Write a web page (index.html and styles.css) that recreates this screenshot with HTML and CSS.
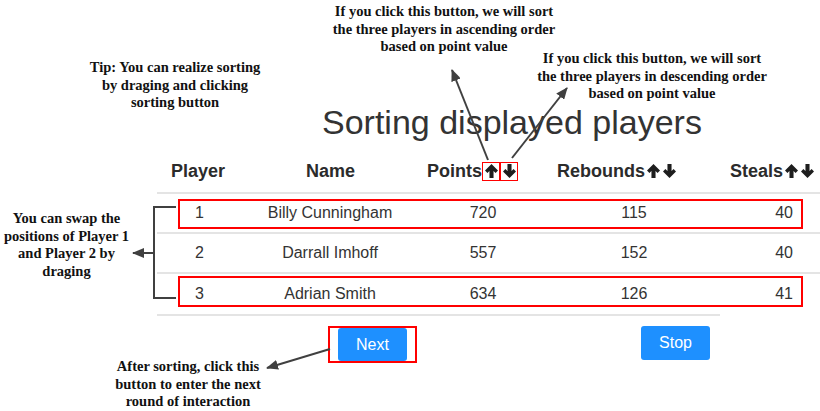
FILE: index.html
```html
<!DOCTYPE html>
<html>
<head>
<meta charset="utf-8">
<link rel="stylesheet" href="styles.css">
</head>
<body>
<div class="app">
  <h1 class="title">Sorting displayed players</h1>
  <div class="table">
    <div class="thead">
      <div class="th">Player</div>
      <div class="th">Name</div>
      <div class="th">Points<span class="sort boxed"><svg viewBox="0 0 14 15"><path d="M7 0L14 7L11.4 9.6L9.2 7.4V15H4.8V7.4L2.6 9.6L0 7Z"/></svg></span><span class="sort boxed"><svg viewBox="0 0 14 15"><path d="M7 15L14 8L11.4 5.4L9.2 7.6V0H4.8V7.6L2.6 5.4L0 8Z"/></svg></span></div>
      <div class="th">Rebounds<span class="sort"><svg viewBox="0 0 14 15"><path d="M7 0L14 7L11.4 9.6L9.2 7.4V15H4.8V7.4L2.6 9.6L0 7Z"/></svg></span><span class="sort"><svg viewBox="0 0 14 15"><path d="M7 15L14 8L11.4 5.4L9.2 7.6V0H4.8V7.6L2.6 5.4L0 8Z"/></svg></span></div>
      <div class="th">Steals<span class="sort"><svg viewBox="0 0 14 15"><path d="M7 0L14 7L11.4 9.6L9.2 7.4V15H4.8V7.4L2.6 9.6L0 7Z"/></svg></span><span class="sort"><svg viewBox="0 0 14 15"><path d="M7 15L14 8L11.4 5.4L9.2 7.6V0H4.8V7.6L2.6 5.4L0 8Z"/></svg></span></div>
    </div>
    <div class="row">
      <div class="c-num">1</div><div class="c-name">Billy Cunningham</div><div class="c-pts">720</div><div class="c-reb">115</div><div class="c-stl">40</div>
      <div class="hl hl-1"></div>
    </div>
    <div class="row">
      <div class="c-num">2</div><div class="c-name">Darrall Imhoff</div><div class="c-pts">557</div><div class="c-reb">152</div><div class="c-stl">40</div>
    </div>
    <div class="row row-last">
      <div class="c-num">3</div><div class="c-name">Adrian Smith</div><div class="c-pts">634</div><div class="c-reb">126</div><div class="c-stl">41</div>
      <div class="hl hl-3"></div>
    </div>
    <div class="bottom-line"></div>
  </div>
  <div class="actions">
    <span class="next-wrap"><button class="btn">Next</button></span>
    <button class="btn btn-stop">Stop</button>
  </div>
</div>

<div class="note note-asc">If you click this button, we will sort<br>the three players in ascending order<br>based on point value</div>
<div class="note note-desc">If you click this button, we will sort<br>the three players in descending order<br>based on point value</div>
<div class="note note-tip">Tip: You can realize sorting<br>by draging and clicking<br>sorting button</div>
<div class="note note-swap">You can swap the<br>positions of Player 1<br>and Player 2 by<br>draging</div>
<div class="note note-after">After sorting, click this<br>button to enter the next<br>round of interaction</div>

<svg class="overlay" width="820" height="411" viewBox="0 0 820 411">
  <defs>
    <marker id="ah" viewBox="0 0 12 10" refX="11" refY="5" markerUnits="userSpaceOnUse" markerWidth="12" markerHeight="10" orient="auto">
      <path d="M0 0L12 5L0 10Z" fill="#404040"/>
    </marker>
  </defs>
  <g stroke="#404040" stroke-width="2" fill="none">
    <line x1="488" y1="160" x2="452" y2="70" marker-end="url(#ah)"/>
    <line x1="512" y1="158" x2="567" y2="88" marker-end="url(#ah)"/>
    <polyline points="176,207 154,207 154,298 176,298"/>
    <line x1="154" y1="253" x2="133" y2="253" marker-end="url(#ah)"/>
    <line x1="330" y1="349" x2="267" y2="368" marker-end="url(#ah)"/>
  </g>
</svg>
</body>
</html>
```

FILE: styles.css
```css
* { box-sizing: border-box; }
html, body { margin: 0; padding: 0; }
body {
  width: 820px;
  height: 411px;
  overflow: hidden;
  position: relative;
  background: #fff;
  font-family: "Liberation Sans", Arial, sans-serif;
  color: #333;
}
.app { padding-top: 102px; }
.title {
  margin: 0;
  padding-left: 322px;
  font-size: 34px;
  line-height: 40px;
  font-weight: normal;
  color: #333;
  white-space: nowrap;
}
.table {
  margin-top: 8px;
  margin-left: 157px;
  width: 663px;
}
.thead {
  display: grid;
  grid-template-columns: 135px 121px 130px 173px 1fr;
  padding-left: 14px;
  height: 44px;
  align-items: center;
  border-bottom: 2px solid #e4e4e4;
  font-weight: bold;
  font-size: 18px;
  color: #2b2b2b;
}
.th { display: flex; align-items: center; white-space: nowrap; line-height: 22px; }
.sort {
  display: inline-flex;
  width: 16px;
  height: 19px;
  align-items: center;
  justify-content: center;
}
.sort svg { width: 13px; height: 14px; fill: #1e1e1e; }
.sort.boxed { width: 18px; height: 19px; border: 1.5px solid #f00; }
.row {
  position: relative;
  display: grid;
  grid-template-columns: 80px 186px 120px 182px 1fr;
  height: 40px;
  align-items: center;
  border-bottom: 2px solid #e4e4e4;
  font-size: 16px;
  color: #333;
}
.row-last { border-bottom: none; }
.c-num { padding-left: 38px; }
.c-name { text-align: center; white-space: nowrap; }
.c-pts { text-align: center; }
.c-reb { text-align: center; }
.c-stl { text-align: right; padding-right: 27px; }
.hl {
  position: absolute;
  left: 21px;
  width: 625px;
  border: 2px solid #f00;
}
.hl-1 { top: 5px; height: 30px; }
.hl-3 { top: 2px; height: 31px; }
.bottom-line { width: 563px; height: 2px; background: #e4e4e4; }
.actions {
  display: flex;
  align-items: flex-start;
  margin-top: 10px;
}
.next-wrap {
  margin-left: 328px;
  display: inline-flex;
  border: 2px solid #f00;
  padding: 0 8px;
}
.btn {
  width: 69px;
  height: 33px;
  border: none;
  border-radius: 3px;
  background: #1e90ff;
  color: #fff;
  font-family: "Liberation Sans", Arial, sans-serif;
  font-size: 16px;
  padding: 0;
}
.btn-stop { margin-left: 224px; height: 34px; }
.note {
  position: absolute;
  font-family: "Liberation Serif", "Times New Roman", serif;
  font-weight: bold;
  font-size: 14.5px;
  line-height: 17.5px;
  color: #111;
  text-align: center;
  white-space: nowrap;
}
.note-asc { left: 314px; top: 3px; width: 260px; }
.note-desc { left: 522px; top: 50px; width: 260px; }
.note-tip { left: 75px; top: 59px; width: 200px; }
.note-swap { left: 0; top: 210px; width: 133px; }
.note-after { left: 88px; top: 358px; width: 200px; }
.overlay { position: absolute; left: 0; top: 0; pointer-events: none; }
```
